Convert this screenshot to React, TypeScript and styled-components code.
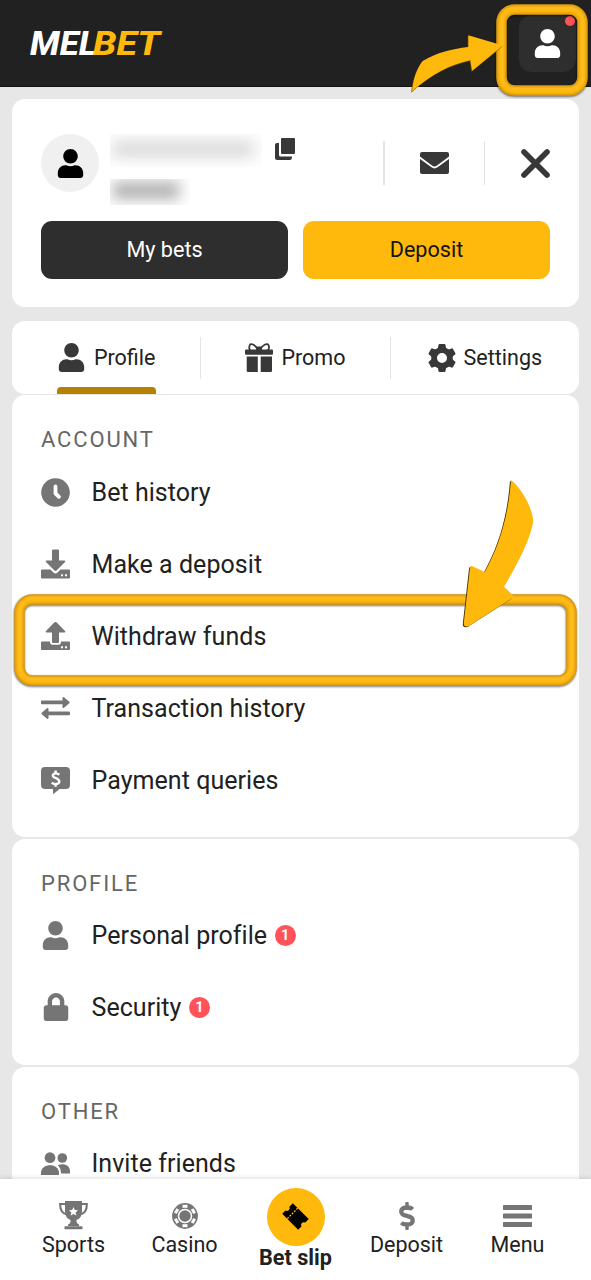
import React from "react";
import styled, { createGlobalStyle } from "styled-components";
import { FaUser, FaLock, FaDollarSign } from "react-icons/fa";

const GlobalStyle = createGlobalStyle`
  * { box-sizing: border-box; }
  html, body { margin: 0; padding: 0; background: #e7e7e7; }
  body { font-family: Roboto, "Liberation Sans", sans-serif; color: #212121; }
  button { font: inherit; border: 0; padding: 0; background: none; color: inherit; }
`;

const Screen = styled.div`
  position: relative;
  width: 591px;
  height: 1280px;
  overflow: hidden;
  display: flex;
  flex-direction: column;
  background: #e7e7e7;
`;

const Header = styled.header`
  height: 87px;
  flex: none;
  display: flex;
  align-items: center;
  justify-content: space-between;
  padding: 0 15px 0 26px;
  background: #212121;
  border-bottom: 1px solid #141414;
`;

const AccountButton = styled.button`
  position: relative;
  width: 57px;
  height: 57px;
  border-radius: 13px;
  background: #2e2e2e;
  color: #fff;
  display: flex;
  align-items: center;
  justify-content: center;
`;

const NoticeDot = styled.span`
  position: absolute;
  top: 1px;
  right: 1px;
  width: 10px;
  height: 10px;
  border-radius: 50%;
  background: #ff5259;
`;

const Content = styled.main`
  flex: 1;
  min-height: 0;
  overflow: hidden;
  padding: 12px 12px 0;
  display: flex;
  flex-direction: column;
`;

const Card = styled.section`
  flex: none;
  background: #fff;
  border-radius: 13px;
`;

const SummaryCard = styled(Card)`
  height: 208px;
  padding: 35px 29px 0 29px;
  margin-bottom: 14px;
`;

const SummaryTop = styled.div`
  display: flex;
  height: 87px;
  align-items: flex-start;
`;

const Avatar = styled.div`
  width: 58px;
  height: 58px;
  border-radius: 50%;
  background: #f0f0f0;
  color: #000;
  display: flex;
  align-items: center;
  justify-content: center;
`;

const Identity = styled.div`
  width: 152px;
  margin-left: 11px;
  display: flex;
  flex-direction: column;
  gap: 12px;
`;

const Masked = styled.div<{ $w: number; $h: number }>`
  width: ${(p) => p.$w}px;
  height: ${(p) => p.$h}px;
  overflow: hidden;
  display: flex;
  align-items: center;
  background: #fdfdfd;
`;

const MaskFill = styled.div<{ $w: number; $h: number; $tone: string }>`
  width: ${(p) => p.$w}px;
  height: ${(p) => p.$h}px;
  margin-left: 3px;
  margin-top: -4px;
  background: ${(p) => p.$tone};
  filter: blur(7px);
`;

const CopyButton = styled.button`
  margin: 4px 0 0 13px;
  height: 22px;
  display: flex;
`;

const SummaryActions = styled.div`
  margin-left: auto;
  height: 58px;
  display: flex;
  align-items: center;
`;

const Divider = styled.span<{ $w: number; $h: number; $tone?: string }>`
  width: ${(p) => p.$w}px;
  height: ${(p) => p.$h}px;
  flex: none;
  background: ${(p) => p.$tone || "#e4e4e4"};
`;

const ActionSlot = styled.button<{ $left: number; $right: number }>`
  display: flex;
  margin: 0 ${(p) => p.$right}px 0 ${(p) => p.$left}px;
`;

const ButtonRow = styled.div`
  display: flex;
  gap: 15px;
`;

const WideButton = styled.button<{ $primary?: boolean }>`
  flex: 1;
  height: 58px;
  padding-bottom: 1px;
  border-radius: 11px;
  font-size: 21.6px;
  background: ${(p) => (p.$primary ? "#ffb80c" : "#2e2e2e")};
  color: ${(p) => (p.$primary ? "#141414" : "#fff")};
`;

const Tabs = styled(Card)`
  height: 73px;
  margin-bottom: 1px;
  display: flex;
  align-items: center;
`;

const Tab = styled.button`
  position: relative;
  flex: 1;
  height: 73px;
  display: flex;
  align-items: center;
  justify-content: center;
  gap: 8px;
  font-size: 21.5px;
  svg { color: #383838; }
`;

const ActiveBar = styled.span`
  position: absolute;
  left: 45px;
  bottom: 0;
  width: 99px;
  height: 7px;
  border-radius: 4px 4px 0 0;
  background: #b58100;
`;

const Section = styled(Card)<{ $h: number }>`
  height: ${(p) => p.$h}px;
  margin-bottom: 2px;
  padding: 28px 29px 0;
`;

const SectionTitle = styled.h2<{ $roomy?: boolean }>`
  margin: 0;
  height: ${(p) => (p.$roomy ? 33.2 : 32.4)}px;
  line-height: 34px;
  font-size: 22px;
  font-weight: 400;
  letter-spacing: 1.85px;
  color: #666;
`;

const Row = styled.div`
  height: 72px;
  display: flex;
  align-items: center;
  font-size: 25px;
  letter-spacing: 0.05px;
`;

const RowIcon = styled.span`
  width: 29px;
  height: 30px;
  margin-right: 21.5px;
  display: flex;
  align-items: center;
  justify-content: center;
  color: #757575;
`;

const Badge = styled.span`
  width: 21px;
  height: 21px;
  margin-left: 7.5px;
  border-radius: 50%;
  background: #ff5259;
  color: #fff;
  font-size: 14.5px;
  font-weight: 700;
  line-height: 21px;
  text-align: center;
`;

const BottomNav = styled.nav`
  flex: none;
  height: 101px;
  padding: 0 18px;
  display: flex;
  background: #fff;
  box-shadow: 0 -1px 5px rgba(0, 0, 0, 0.13);
  position: relative;
`;

const NavItem = styled.button<{ $active?: boolean }>`
  flex: 1;
  padding-top: ${(p) => (p.$active ? 9 : 21)}px;
  display: flex;
  flex-direction: column;
  align-items: center;
  font-size: ${(p) => (p.$active ? 21.6 : 21.5)}px;
  font-weight: ${(p) => (p.$active ? 700 : 400)};
  line-height: 26px;
  white-space: nowrap;
`;

const NavIcon = styled.span`
  height: 31px;
  margin-bottom: 1px;
  display: flex;
  align-items: center;
  color: #757575;
`;

const SlipCircle = styled.span`
  width: 58px;
  height: 58px;
  margin-bottom: -1px;
  border-radius: 50%;
  background: #ffb80c;
  display: flex;
  align-items: center;
  justify-content: center;
`;

const Annotations = styled.svg`
  position: absolute;
  inset: 0;
  pointer-events: none;
`;

const Logo = () => (
  <svg width="144" height="50" viewBox="0 0 144 50">
    <g fontFamily="Roboto" fontWeight="800" fontStyle="italic" fontSize="33">
      <text x="4" y="36.700" fill="#fff" textLength="67" lengthAdjust="spacingAndGlyphs">MEL</text>
      <text x="67" y="36.700" fill="#ffb80c" textLength="67" lengthAdjust="spacingAndGlyphs">BET</text>
    </g>
  </svg>
);

const CopyIcon = () => (
  <svg width="20" height="22" viewBox="0 0 20 22" fill="#383838">
    <rect x="6" y="0" width="14" height="16" rx="1" />
    <path d="M4 5H2Q0 5 0 7V20Q0 22 2 22H15Q17 22 17 18.500H5.500Q4 18.500 4 17Z" />
  </svg>
);

const MailIcon = () => (
  <svg width="29" height="22" viewBox="0 0 29 22" fill="#383838">
    <path d="M2 0H27Q29 0 29 2V4.500L17 13.500Q14.500 15.500 12 13.500L0 4.500V2Q0 0 2 0Z" />
    <path d="M0 7L11.500 15.300Q14.500 17.500 17.500 15.300L29 7V20Q29 22 27 22H2Q0 22 0 20Z" />
  </svg>
);

const CloseIcon = () => (
  <svg width="29" height="29" viewBox="0 0 29 29" stroke="#383838" strokeWidth="5.600" strokeLinecap="round">
    <path d="M3 3L26 26M26 3L3 26" />
  </svg>
);

const GiftIcon = () => (
  <svg width="28" height="29" viewBox="0 0 28 29" fill="currentColor">
    <rect x="0" y="6.500" width="28" height="5.200" rx="1" />
    <path d="M1.700 13.500H12.800V29H3Q1.700 29 1.700 27.700ZM15.700 13.500H27V27.700Q27 29 25.700 29H15.700Z" />
    <path d="M13 6.600C10 1.600 5.500-.5 4.700 2.300C4 4.500 4 6.500 5.500 7.200M15 6.600C18 1.600 22.500-.5 23.600 2.300C24.300 4.500 24 6.500 22.500 7.200" fill="none" stroke="currentColor" strokeWidth="1.800" />
    <rect x="11" y="3.500" width="6" height="4" rx="1.500" />
  </svg>
);

const GearIcon = () => (
  <svg width="28" height="28" viewBox="-14 -14 28 28" fill="currentColor">
    <circle r="7.900" fill="none" stroke="currentColor" strokeWidth="5.800" />
    {[0, 60, 120, 180, 240, 300].map((a) => (
      <path key={a} d="M-4.400-8.500L-3.500-13Q-3.300-14-2.500-14H2.500Q3.300-14 3.500-13L4.400-8.500Z" transform={`rotate(${a})`} />
    ))}
  </svg>
);

const ClockIcon = () => (
  <svg width="29" height="29" viewBox="0 0 29 29">
    <circle cx="14.500" cy="14.500" r="14.300" fill="currentColor" />
    <path d="M14.500 8.500V15.500L18 18.800" fill="none" stroke="#fff" strokeWidth="3.800" strokeLinecap="round" strokeLinejoin="round" />
  </svg>
);

const TrayDots = () => (
  <g fill="#fff">
    <rect x="20" y="25.300" width="2" height="2" />
    <rect x="24" y="25.300" width="2" height="2" />
  </g>
);

const DownloadIcon = () => (
  <svg width="29" height="30" viewBox="0 0 29 30" fill="currentColor">
    <path d="M12 .5H17Q18 .5 18 1.500V11.500H23.500Q25 11.700 24 13L15.500 21.500Q14.500 22.400 13.500 21.500L5 13Q4 11.700 5.500 11.500H11V1.500Q11 .5 12 .5Z" />
    <path d="M1 20.500H9.500L12.700 23.700Q14.500 25.200 16.300 23.700L19.500 20.500H28Q29 20.500 29 21.500V28.500Q29 29.500 28 29.500H1Q0 29.500 0 28.500V21.500Q0 20.500 1 20.500Z" />
    <TrayDots />
  </svg>
);

const UploadIcon = () => (
  <svg width="29" height="30" viewBox="0 0 29 30" fill="currentColor">
    <path d="M12 22H17Q18 22 18 21V11.500H23.500Q25 11.300 24 10L15.500 1.300Q14.500.5 13.500 1.300L5 10Q4 11.300 5.500 11.500H11V21Q11 22 12 22Z" />
    <path d="M1 20.500H9V21.500Q9.200 23.700 11.500 23.700H17.500Q19.800 23.700 20 21.500V20.500H28Q29 20.500 29 21.500V28Q29 29 28 29H1Q0 29 0 28V21.500Q0 20.500 1 20.500Z" />
    <TrayDots />
  </svg>
);

const TransferIcon = () => (
  <svg width="29" height="24" viewBox="0 0 29 24" fill="currentColor">
    <path d="M1 4.500H21.500V2Q21.700.5 23 1.200L28.300 5.800Q29 6.500 28.300 7.200L23 11.700Q21.700 12.500 21.500 11V8.200H1Q0 8.200 0 7.200V5.500Q0 4.500 1 4.500Z" />
    <path d="M28 15.500H7.500V13Q7.300 11.500 6 12.200L.7 16.800Q0 17.500.7 18.200L6 22.700Q7.300 23.500 7.500 22V19.200H28Q29 19.200 29 18.200V16.500Q29 15.500 28 15.500Z" />
  </svg>
);

const dollarMark = "M18.300 7.800Q16 5.900 13.400 6.600Q10.400 8.300 13 10.300L16.500 11.900Q19.700 14 17.400 16.300Q14.500 18.100 10.700 15.700M14.600 3.400V6.500M14.600 17V19.700";

const QueryIcon = () => (
  <svg width="29" height="27" viewBox="0 0 29 27">
    <path d="M4 0H25Q29 0 29 4V18Q29 22 25 22H18.500L12.800 26.800Q12 27.200 12 26V22H4Q0 22 0 18V4Q0 0 4 0Z" fill="currentColor" />
    <path d={dollarMark} fill="none" stroke="#fff" strokeWidth="2.400" />
  </svg>
);

const FriendsIcon = () => (
  <svg width="29" height="23" viewBox="0 0 29 23" fill="currentColor">
    <circle cx="9" cy="5.700" r="5.400" />
    <path d="M0 23V21C0 10.500 18 10.500 18 21V23Z" />
    <circle cx="21.300" cy="6" r="4.800" />
    <path d="M16.800 13.200C22 10.800 29 12.500 29 19V21.500H20C20 18 19 15.300 16.800 13.200Z" />
  </svg>
);

const TrophyIcon = () => (
  <svg width="29" height="29" viewBox="0 0 29 29" fill="currentColor">
    <path d="M6 0H23V10Q23 17 17.500 19V21Q18 22.500 20 23.500V25H9V23.500Q11 22.500 11.500 21V19Q6 17 6 10Z" />
    <rect x="5.500" y="25.300" width="18" height="3" rx=".5" />
    <path d="M6.500 3H1.200C1 9 3.500 12.500 8 13.500M22.500 3H27.800C28 9 25.500 12.500 21 13.500" fill="none" stroke="currentColor" strokeWidth="2.100" />
    <path d="M14.500 6L15.800 9L19 9.300L16.600 11.400L17.400 14.600L14.500 12.900L11.600 14.600L12.400 11.400L10 9.300L13.200 9Z" fill="#fff" />
  </svg>
);

const ChipIcon = () => (
  <svg width="26" height="26" viewBox="-13 -13 26 26">
    <circle r="12.900" fill="currentColor" />
    {[0, 60, 120, 180, 240, 300].map((a) => (
      <rect key={a} x="-2.500" y="-11.200" width="5" height="3" fill="#fff" transform={`rotate(${a})`} />
    ))}
    <circle r="6.500" fill="none" stroke="#fff" strokeWidth="1.500" />
  </svg>
);

const TicketIcon = () => (
  <svg width="30" height="30" viewBox="-15 -15 30 30">
    <g transform="rotate(45)">
      <path d="M-12-7.500H10.500V-2.600A2.800 2.800 0 0 0 10.500 2.800V7.500H-12V2.800A2.800 2.800 0 0 0-12-2.600Z" />
      <path d="M-5-7.500V7.500" stroke="#ffb80c" strokeWidth="1.300" strokeDasharray="2 1.200" />
    </g>
  </svg>
);

const MenuIcon = () => (
  <svg width="29" height="22" viewBox="0 0 29 22" fill="currentColor">
    <rect width="29" height="5" rx=".7" />
    <rect y="8.500" width="29" height="5" rx=".7" />
    <rect y="17" width="29" height="5" rx=".7" />
  </svg>
);

const BevelFrame = ({ x, y, w, h, r }: { x: number; y: number; w: number; h: number; r: number }) => {
  const box = { x, y, width: w, height: h, rx: r, fill: "none" };
  return (
    <g>
      <rect {...box} stroke="#000" strokeOpacity=".6" strokeWidth="10.500" transform="translate(-.3 1)" filter="url(#soft)" />
      <rect {...box} stroke="#d9980f" strokeWidth="10.500" />
      <rect {...box} stroke="#ffb90f" strokeWidth="6.500" filter="url(#glow)" />
      <rect {...box} stroke="#ffd15a" strokeOpacity=".6" strokeWidth="1" transform="translate(.5 -2)" filter="url(#glow)" />
    </g>
  );
};

const HeaderArrow = "M412 91.500C413 79 417 68 422.700 61C436 53 451 49 468.300 47V35.300L503 45.500L472 71L470.300 60.300C450 65 433 73 412 91.500Z";
const RowArrow = "M511 480C521 488 532 506 533.300 521.500C530 540 518 563 504 586.700L513 595.500Q514 597 512.500 598L468.500 626.200Q463.500 627.500 463.800 623L470 568Q470.500 565.500 472.500 566.300L484.700 572C498 548 508 520 511 480Z";

const accountRows = [
  { label: "Bet history", icon: <ClockIcon /> },
  { label: "Make a deposit", icon: <DownloadIcon /> },
  { label: "Withdraw funds", icon: <UploadIcon /> },
  { label: "Transaction history", icon: <TransferIcon /> },
  { label: "Payment queries", icon: <QueryIcon /> },
];

const profileRows = [
  { label: "Personal profile", icon: <FaUser size={29} />, badge: 1 },
  { label: "Security", icon: <FaLock size={28} />, badge: 1 },
];

const otherRows = [{ label: "Invite friends", icon: <FriendsIcon /> }];

type RowData = { label: string; icon: React.ReactNode; badge?: number };

type MenuSectionProps = { title: string; rows: RowData[]; height: number; roomy?: boolean };

const MenuSection = ({ title, rows, height, roomy }: MenuSectionProps) => (
  <Section $h={height}>
    <SectionTitle $roomy={roomy}>{title}</SectionTitle>
    {rows.map((row) => (
      <Row key={row.label}>
        <RowIcon>{row.icon}</RowIcon>
        {row.label}
        {row.badge && <Badge>{row.badge}</Badge>}
      </Row>
    ))}
  </Section>
);

export default function App() {
  return (
    <Screen>
      <GlobalStyle />
      <Header>
        <Logo />
        <AccountButton aria-label="Account">
          <FaUser size={29} />
          <NoticeDot />
        </AccountButton>
      </Header>
      <Content>
        <SummaryCard>
          <SummaryTop>
            <Avatar><FaUser size={29} /></Avatar>
            <Identity>
              <Masked $w={152} $h={33}><MaskFill $w={140} $h={16} $tone="#dadada" /></Masked>
              <Masked $w={80} $h={26}><MaskFill $w={66} $h={17} $tone="#b0b0b0" /></Masked>
            </Identity>
            <CopyButton aria-label="Copy"><CopyIcon /></CopyButton>
            <SummaryActions>
              <Divider $w={2} $h={44} />
              <ActionSlot $left={35} $right={35} aria-label="Messages"><MailIcon /></ActionSlot>
              <Divider $w={1} $h={44} />
              <ActionSlot $left={36} $right={0} aria-label="Close"><CloseIcon /></ActionSlot>
            </SummaryActions>
          </SummaryTop>
          <ButtonRow>
            <WideButton>My bets</WideButton>
            <WideButton $primary>Deposit</WideButton>
          </ButtonRow>
        </SummaryCard>
        <Tabs>
          <Tab><FaUser size={29} />Profile<ActiveBar /></Tab>
          <Divider $w={1} $h={42} />
          <Tab><GiftIcon />Promo</Tab>
          <Divider $w={1} $h={42} />
          <Tab><GearIcon />Settings</Tab>
        </Tabs>
        <MenuSection title="ACCOUNT" rows={accountRows} height={442} roomy />
        <MenuSection title="PROFILE" rows={profileRows} height={226} />
        <MenuSection title="OTHER" rows={otherRows} height={226} />
      </Content>
      <BottomNav>
        <NavItem><NavIcon><TrophyIcon /></NavIcon>Sports</NavItem>
        <NavItem><NavIcon><ChipIcon /></NavIcon>Casino</NavItem>
        <NavItem $active><SlipCircle><TicketIcon /></SlipCircle>Bet slip</NavItem>
        <NavItem><NavIcon><FaDollarSign size={28} /></NavIcon>Deposit</NavItem>
        <NavItem><NavIcon><MenuIcon /></NavIcon>Menu</NavItem>
      </BottomNav>
      <Annotations width="591" height="1280" viewBox="0 0 591 1280">
        <defs>
          <filter id="soft" x="-10%" y="-20%" width="120%" height="140%"><feGaussianBlur stdDeviation="1.3" /></filter>
          <filter id="glow" x="-10%" y="-20%" width="120%" height="140%"><feGaussianBlur stdDeviation=".8" /></filter>
        </defs>
        <BevelFrame x={501.5} y={9.500} w={81} h={81} r={13} />
        <BevelFrame x={19.5} y={599.5} w={552} h={81} r={13} />
        <g fill="#ffb80c">
          <path d={HeaderArrow} fill="#5a4200" transform="translate(-.7 .9)" />
          <path d={HeaderArrow} />
          <path d={RowArrow} fill="#4a3600" transform="translate(-1 .7)" />
          <path d={RowArrow} />
        </g>
      </Annotations>
    </Screen>
  );
}
